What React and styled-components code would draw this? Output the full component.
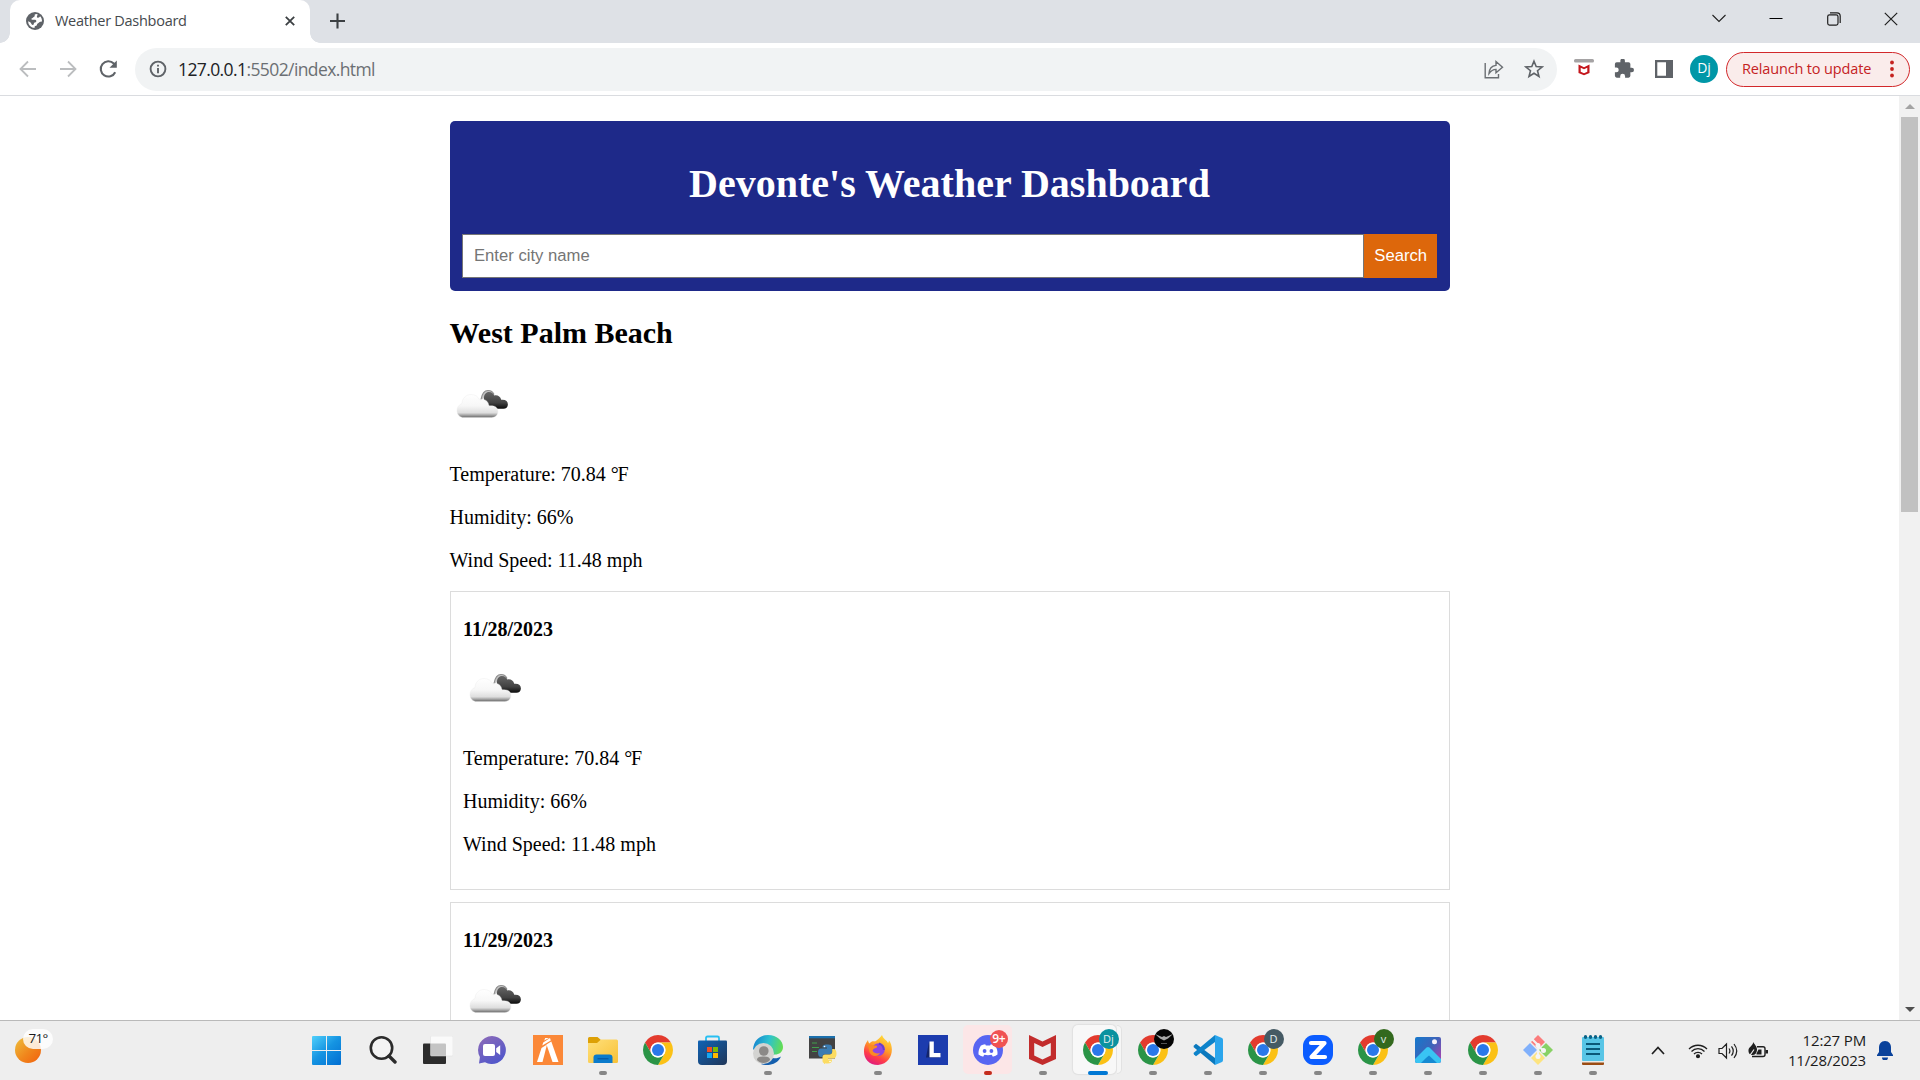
import React from "react";
import styled, { createGlobalStyle } from "styled-components";

const GlobalStyle = createGlobalStyle`
  * { box-sizing: border-box; }
  html, body { margin: 0; padding: 0; height: 100%; overflow: hidden; }
  body { background: #fff; color: #000; }
`;

const ui = `"Open Sans", "Noto Sans", sans-serif`;

const Screen = styled.div`
  width: 1920px;
  height: 1080px;
  display: flex;
  flex-direction: column;
  overflow: hidden;
  font-family: ${ui};
`;

/* ---------- browser chrome ---------- */

const TabStrip = styled.div`
  height: 43px;
  flex: none;
  background: #dee1e6;
  display: flex;
  padding-left: 10px;
`;

const Tab = styled.div`
  position: relative;
  width: 300px;
  height: 43px;
  background: #fff;
  border-radius: 10px 10px 0 0;
  display: flex;
  align-items: center;
  padding: 0 13px 1px 16px;
  &::before, &::after {
    content: "";
    position: absolute;
    bottom: 0;
    width: 10px;
    height: 10px;
  }
  &::before { left: -10px; background: radial-gradient(circle at 0 0, #dee1e6 9.5px, #fff 10px); }
  &::after { right: -10px; background: radial-gradient(circle at 100% 0, #dee1e6 9.5px, #fff 10px); }
`;

const TabTitle = styled.span`
  flex: 1;
  margin-left: 11px;
  padding-bottom: 2px;
  font-size: 14.5px;
  letter-spacing: -0.27px;
  color: #45494d;
  white-space: nowrap;
`;

const NewTab = styled.div`
  width: 55px;
  height: 42px;
  display: flex;
  align-items: center;
  justify-content: center;
`;

const WindowControls = styled.div`
  margin-left: auto;
  display: flex;
  height: 37px;
`;

const WindowButton = styled.div`
  width: 57.5px;
  height: 37px;
  display: flex;
  align-items: center;
  justify-content: center;
`;

const Toolbar = styled.div`
  height: 53px;
  flex: none;
  background: #fff;
  border-bottom: 1px solid #dadce0;
  display: flex;
  align-items: center;
  padding: 0 10px 0 7.5px;
`;

const ToolSlot = styled.div`
  width: ${(p) => p.$w || 40}px;
  height: 40px;
  flex: none;
  display: flex;
  align-items: center;
  justify-content: center;
`;

const Omnibox = styled.div`
  flex: 1;
  height: 43px;
  margin-left: 7.5px;
  background: #f1f3f4;
  border-radius: 22px;
  display: flex;
  align-items: center;
  padding: 0 3px 0 13px;
`;

const Url = styled.span`
  flex: 1;
  margin-left: 11px;
  font-size: 17.5px;
  letter-spacing: -0.6px;
  color: #6b6f73;
  b { font-weight: 400; color: #202124; }
`;

const Avatar = styled.div`
  width: 28px;
  height: 28px;
  border-radius: 50%;
  background: #0097a7;
  color: #fff;
  font-size: 14px;
  line-height: 26px;
  text-align: center;
`;

const Relaunch = styled.div`
  width: 184px;
  height: 35px;
  margin-left: 8px;
  border: 1.5px solid #d2282b;
  border-radius: 18px;
  background: #faeceb;
  color: #c5221f;
  font-size: 14.5px;
  letter-spacing: -0.15px;
  display: flex;
  align-items: center;
  justify-content: space-between;
  padding: 0 15px 0 15px;
  white-space: nowrap;
`;

const RelaunchLabel = styled.span`
  padding-bottom: 2px;
`;

/* ---------- page ---------- */

const Viewport = styled.div`
  flex: 1;
  min-height: 0;
  display: flex;
  background: #fff;
`;

const Page = styled.div`
  flex: 1;
  min-width: 0;
  overflow: hidden;
  padding-top: 25px;
  font-family: "Liberation Serif", "Times New Roman", serif;
  font-size: 20px;
  line-height: 23px;
`;

const Container = styled.main`
  width: 1000px;
  margin: 0 auto;
`;

const Banner = styled.header`
  height: 170px;
  padding: 12.5px;
  background: #1e2989;
  border-radius: 5px;
`;

const Title = styled.h1`
  margin: 27px 0 27px;
  font-size: 40px;
  line-height: 46px;
  text-align: center;
  color: #fff;
`;

const SearchRow = styled.div`
  display: flex;
  height: 44px;
`;

const CityInput = styled.input`
  flex: 1;
  min-width: 0;
  border: 1px solid #767676;
  border-radius: 0;
  padding: 1px 11px 0;
  font: 16.67px "Liberation Sans", Arial, sans-serif;
  outline: none;
  &::placeholder { color: #757575; }
`;

const SearchButton = styled.button`
  width: 73.5px;
  border: 0;
  padding: 1px 0 0 1px;
  background: #dd670b;
  color: #fff;
  font: 16.67px "Liberation Sans", Arial, sans-serif;
`;

const City = styled.h2`
  margin: 25px 0 25.5px;
  font-size: 30px;
  line-height: 34px;
`;

const WeatherIcon = styled.svg`
  display: block;
  width: 62.5px;
  height: 62.5px;
  margin-bottom: 24.5px;
`;

const Reading = styled.p`
  margin: 0 0 20px;
  &:last-of-type { margin-bottom: 19.5px; }
`;

const DegreeSign = styled.span`
  letter-spacing: -1.3px;
`;

const ForecastCard = styled.section`
  height: 299px;
  margin-bottom: 12px;
  border: 1px solid #dcdcdc;
  padding: 25.5px 12.5px 0;
`;

const Day = styled.h4`
  margin: 0 0 19.5px;
  font-size: 20px;
  line-height: 23px;
`;

const Scrollbar = styled.div`
  width: 21px;
  flex: none;
  background: #f1f1f1;
  display: flex;
  flex-direction: column;
  align-items: center;
`;

const ScrollArrow = styled.div`
  height: 21px;
  flex: none;
  display: flex;
  align-items: center;
`;

const ScrollThumb = styled.div`
  width: 17px;
  height: 395px;
  margin-bottom: auto;
  background: #c1c1c1;
`;

/* ---------- taskbar ---------- */

const Taskbar = styled.footer`
  height: 60px;
  flex: none;
  background: #eeeeee;
  border-top: 1px solid #b9b9b9;
  display: flex;
  align-items: stretch;
`;

const WeatherWidget = styled.div`
  position: relative;
  width: 300px;
  flex: none;
  padding: 16px 0 0 15px;
`;

const Sun = styled.div`
  width: 26px;
  height: 26px;
  border-radius: 50%;
  background: linear-gradient(135deg, #eec03c, #f0861c 55%, #f2600d);
`;

const Degrees = styled.div`
  position: absolute;
  left: 23px;
  top: 8px;
  width: 30px;
  height: 20px;
  border-radius: 10px;
  background: rgba(255, 255, 255, 0.82);
  font-size: 13.5px;
  letter-spacing: -0.7px;
  line-height: 19px;
  text-align: center;
  color: #1b1b1b;
`;

const Apps = styled.div`
  display: flex;
`;

const TaskbarApp = styled.div`
  position: relative;
  width: 55px;
  display: flex;
  align-items: center;
  justify-content: center;
  padding-bottom: 1px;
  padding-right: ${(p) => p.$nudge || 0}px;
  isolation: isolate;
  svg { display: block; }
  &::before {
    content: "";
    position: absolute;
    z-index: -1;
    left: 3px;
    top: 4px;
    width: ${(p) => (p.$active ? 43 : 49)}px;
    height: 49px;
    border-radius: 5px;
    background: ${(p) => p.$tint || "transparent"};
    box-shadow: ${(p) => (p.$active ? "0 0 1px 1px #e0e0e0" : "none")};
  }
  &::after {
    content: "";
    position: absolute;
    bottom: 5px;
    left: calc(50% - ${(p) => (p.$active ? 10 : 4)}px);
    width: ${(p) => (p.$active ? 20 : 8)}px;
    height: 4px;
    border-radius: 2px;
    background: ${(p) => p.$dot || "transparent"};
  }
`;

const StackEdge = styled.div`
  position: absolute;
  z-index: -1;
  left: 47px;
  top: 4px;
  width: 5px;
  height: 49px;
  border: 1px solid #e2e2e2;
  border-left: 0;
  border-radius: 0 5px 5px 0;
  background: #f6f6f6;
`;

const ProfileBadge = styled.div`
  position: absolute;
  top: 8px;
  left: 28.5px;
  width: 20px;
  height: 20px;
  border-radius: 50%;
  background: ${(p) => p.$bg};
  color: #e5eef0;
  font-size: 11px;
  line-height: 18px;
  display: flex;
  justify-content: center;
  align-items: center;
`;

const CountBadge = styled.div`
  position: absolute;
  top: 9px;
  left: 29.5px;
  width: 18.5px;
  height: 18px;
  border-radius: 9px;
  background: #f05252;
  color: #fff;
  font-size: 12px;
  font-weight: 600;
  letter-spacing: -0.3px;
  line-height: 17px;
  text-align: center;
`;

const Tray = styled.div`
  margin-left: auto;
  display: flex;
  align-items: center;
  padding-right: 20px;
`;

const TrayIcon = styled.div`
  width: ${(p) => p.$w}px;
  height: 40px;
  display: flex;
  align-items: center;
  justify-content: center;
`;

const Clock = styled.div`
  width: 88px;
  font-size: 15px;
  letter-spacing: -0.15px;
  line-height: 20px;
  text-align: right;
  color: #1b1b1b;
  padding-bottom: 2px;
  margin-right: 4px;
`;

/* ---------- drawings ---------- */

const Globe = () => (
  <svg width="18" height="18" viewBox="0 0 18 18">
    <circle cx="9" cy="9" r="9" fill="#5f6368" />
    <path d="M10.500 2C8.800 2 8.300 3 8.800 3.900 8.500 5 7 4.800 6.600 5.900 5.800 6 5 6.500 5.600 7.400 6.800 8.300 8.500 7 9.800 8.100c1.200 1.200.2 2.300-.9 2.500-1.400.2-.8 1.700-1.700 2.300-.8.500-1.700-.3-2-1.300C4.700 10.300 3.600 9.800 2 9.300a7 7 0 0 0 6.600 6.700c-.2-1.400.1-2 1.500-2.200 1.200-.2.600-1.700 1.600-2.300 1.200-.6 1.500-1.600 2.700-1.800L16 9.500c.1-2.200-.6-4-1.900-5.200-.5 1-1.300 1.700-2.500 1.400-1.300-.4-.6-1.800.2-3.200z" fill="#fff" />
  </svg>
);

const Stroke = ({ w = 20, h = w, box = `0 0 ${w} ${h}`, d, color = "#1f1f1f", sw = 1.3, children }) => (
  <svg width={w} height={h} viewBox={box} fill="none" stroke={color} strokeWidth={sw}>
    <path d={d} />
    {children}
  </svg>
);

const CloudIcon = () => (
  <WeatherIcon viewBox="0 0 62.5 62.5">
    <defs>
      <linearGradient id="cloudLight" gradientUnits="userSpaceOnUse" x1="0" y1="18" x2="0" y2="41.500">
        <stop offset="0" stopColor="#fff" />
        <stop offset=".5" stopColor="#f7f7f7" />
        <stop offset=".8" stopColor="#dedede" />
        <stop offset=".9" stopColor="#a5a5a5" />
        <stop offset="1" stopColor="#686868" />
      </linearGradient>
      <linearGradient id="cloudDark" gradientUnits="userSpaceOnUse" x1="0" y1="15" x2="0" y2="33">
        <stop offset="0" stopColor="#696969" />
        <stop offset=".65" stopColor="#414141" />
        <stop offset="1" stopColor="#080808" />
      </linearGradient>
    </defs>
    <path d="M31 23.500C32 18 34 14.500 38 14.500c3 0 5 1.500 6 4" fill="#c4c4c4" stroke="#8f8f8f" strokeWidth="1.200" />
    <path d="M34 22c0-3.500 2-6 5-6 3 0 4.500 2 5.200 3.500 3-.8 6.300.7 7 4.300 4.300-.6 6.700 1.500 6.700 4.600 0 2.600-2 4.400-4.500 4.400H43L34 26z" fill="url(#cloudDark)" />
    <path d="M14 41.500c-4.200 0-7-3-7-6.800 0-3.400 1.800-6 5-7.200 0-5 3.800-9 9-9 4.300 0 7.500 2.400 8.700 5.600 4.500-2 8.800.7 9.200 5.700 5-.6 9 1 9 5.500 0 3.800-2.700 6.200-6.200 6.200z" fill="url(#cloudLight)" stroke="#e7e7e7" strokeWidth=".5" strokeOpacity=".7" />
  </WeatherIcon>
);

const Chrome = () => (
  <svg width="30" height="30" viewBox="0 0 48 48">
    <path d="M3.220 12A24 24 0 0 1 44.780 12H24A12 12 0 0 0 13.600 30z" fill="#e33b2e" />
    <path d="M44.780 12A24 24 0 0 1 24 48L34.390 30A12 12 0 0 0 24 12z" fill="#fbc116" />
    <path d="M24 48A24 24 0 0 1 3.220 12L13.600 30A12 12 0 0 0 34.390 30z" fill="#2a9446" />
    <circle cx="24" cy="24" r="12" fill="#fff" />
    <circle cx="24" cy="24" r="9.600" fill="#2a78ea" />
  </svg>
);

const Windows = () => (
  <svg width="29" height="29" viewBox="0 0 29 29">
    <defs>
      <linearGradient id="win" gradientUnits="userSpaceOnUse" x1="0" y1="0" x2="26" y2="29">
        <stop offset="0" stopColor="#50d0fb" />
        <stop offset=".5" stopColor="#1594e2" />
        <stop offset="1" stopColor="#0371d3" />
      </linearGradient>
    </defs>
    <path d="M1 0H14V14H0V1Q0 0 1 0zM15 0H28Q29 0 29 1V14H15zM0 15H14V29H1Q0 29 0 28zM15 15H29V28Q29 29 28 29H15z" fill="url(#win)" />
  </svg>
);

const Search = () => (
  <svg width="28" height="28" viewBox="0 0 28 28" fill="none" stroke="#2b2b2b">
    <circle cx="12.500" cy="12" r="10.700" strokeWidth="2.600" fill="#f3f3f3" />
    <path d="M20 20l6 6" strokeWidth="3.400" strokeLinecap="round" />
  </svg>
);

const TaskView = () => (
  <svg width="30" height="28" viewBox="0 0 30 28">
    <rect x="0" y="7.500" width="23" height="20.500" rx="1" fill="#2c2c2c" />
    <rect x="7.500" y="0" width="22.500" height="20" rx="1" fill="#fff" fillOpacity=".72" stroke="#dedede" strokeWidth=".5" />
  </svg>
);

const Chat = () => (
  <svg width="30" height="30" viewBox="0 0 30 30">
    <defs>
      <linearGradient id="chat" x1="0" y1="0" x2=".6" y2="1">
        <stop offset="0" stopColor="#8f6bb7" />
        <stop offset="1" stopColor="#5257ca" />
      </linearGradient>
    </defs>
    <path d="M15 1a14 14 0 1 1-7 26.200L2 28.500 2.900 22A14 14 0 0 1 15 1z" fill="url(#chat)" />
    <rect x="6" y="9" width="12" height="12" rx="2" fill="#fff" />
    <path d="M19.200 13.200l4-3v9.700l-4-3z" fill="#fff" />
  </svg>
);

const FiveM = () => (
  <svg width="30" height="30" viewBox="0 0 30 30">
    <rect width="30" height="30" fill="#fb8838" />
    <path d="M4 27L8.500 13 14 9.500 9.500 27z" fill="#fff" />
    <path d="M9.300 10.500L10.200 7.500 17 3 17.800 5.500zM11.200 5.500L12.200 3H16z" fill="#fff" />
    <path d="M13.500 9.500L18.300 6.500 25.500 27H19.500z" fill="#fff" />
  </svg>
);

const Folder = () => (
  <svg width="30" height="26" viewBox="0 0 30 26">
    <defs>
      <linearGradient id="folder" x1="0" y1="0" x2="1" y2="1">
        <stop offset="0" stopColor="#ffe07b" />
        <stop offset="1" stopColor="#f8c136" />
      </linearGradient>
    </defs>
    <path d="M0 1.500Q0 0 1.500 0H9.500L13 3H28.500V8H0z" fill="#dda006" />
    <path d="M0 6H9L13 2.500H28.500Q30 2.500 30 4V24.500Q30 26 28.500 26H1.500Q0 26 0 24.500z" fill="url(#folder)" />
    <path d="M5.500 26V20.500Q5.500 17.500 8.500 17.500H21.500Q24.500 17.500 24.500 20.500V26z" fill="#0b7bcc" />
    <path d="M9.500 21.800H20.500" stroke="#07519a" strokeWidth="1" />
  </svg>
);

const Store = () => (
  <svg width="29" height="30" viewBox="0 0 29 30">
    <defs>
      <linearGradient id="store" x1="0" y1="0" x2="1" y2="1">
        <stop offset="0" stopColor="#0f63b5" />
        <stop offset="1" stopColor="#203658" />
      </linearGradient>
    </defs>
    <path d="M8 8V3Q8 1.500 9.500 1.500H19.500Q21 1.500 21 3V8" fill="none" stroke="#28bff2" strokeWidth="1.800" />
    <path d="M0 6.500Q0 5.500 1 5.500H28Q29 5.500 29 6.500V26Q29 30 25 30H4Q0 30 0 26z" fill="url(#store)" />
    <path d="M9 12h5v5H9z" fill="#f25022" /><path d="M15 12h5v5h-5z" fill="#7fba00" />
    <path d="M9 18h5v5H9z" fill="#16a6f0" /><path d="M15 18h5v5h-5z" fill="#ffb900" />
  </svg>
);

const Edge = () => (
  <svg width="30" height="30" viewBox="0 0 30 30">
    <defs>
      <linearGradient id="edge" x1="0" y1=".3" x2="1" y2=".5">
        <stop offset="0" stopColor="#1684cf" />
        <stop offset=".5" stopColor="#2cc2cf" />
        <stop offset="1" stopColor="#66de4f" />
      </linearGradient>
    </defs>
    <path d="M0 14C1 5 7 0 15 0c9 0 15 6 15 12 0 5-4 7.500-8 7.500L8 22z" fill="url(#edge)" />
    <path d="M8 29C12 31 24 31 28 21.500 24 24 20 23.500 18 22z" fill="#145fae" />
    <circle cx="10.500" cy="18.500" r="10.500" fill="#d3d3d1" />
    <circle cx="10.800" cy="16" r="4.800" fill="#8b8987" />
    <path d="M4 25c0-3 3-3.500 6.500-3.500S17 22 17 25c-1.500 2-4 3-6.500 3S5.500 27 4 25z" fill="#8b8987" />
  </svg>
);

const PythonIde = () => (
  <svg width="28" height="28" viewBox="0 0 28 28">
    <rect width="26" height="22.500" fill="#424242" />
    <rect width="26" height="2.300" fill="#1c70ad" />
    <path d="M3 7H8M3 11.500H10M3 15.500H8" stroke="#409f4c" strokeWidth="1" />
    <path d="M18 8.500c4 0 5 .8 5 3V16c0 1.500-1 2.300-2.500 2.300H16c-1.600 0-2.500 1-2.500 2.700H12c-2.200 0-3-2-3-4.500s1-4 3-4h6v-1h-4.500c0-2 1-3 4.500-3z" fill="#3b7cb2" />
    <path d="M18.500 27.500c-4 0-5-.8-5-3V21c0-1.500 1-2.500 2.500-2.500h4.500c1.700 0 2.700-1.200 2.700-2.700V13h1.300c2.500 0 3 2.500 3 4.700 0 2.500-1 4.800-3 4.800h-5.500v1H23c0 3-1.500 4-4.500 4z" fill="#fcdc62" />
    <circle cx="15.500" cy="10.500" r=".8" fill="#fff" /><circle cx="21" cy="25.500" r=".8" fill="#fff" />
  </svg>
);

const Firefox = () => (
  <svg width="30" height="30" viewBox="0 0 30 30">
    <defs>
      <linearGradient id="fox" x1=".8" y1="0" x2=".35" y2="1">
        <stop offset="0" stopColor="#ffe43c" />
        <stop offset=".45" stopColor="#ff9a28" />
        <stop offset=".75" stopColor="#ff3d48" />
        <stop offset="1" stopColor="#e01d7d" />
      </linearGradient>
    </defs>
    <path d="M19 0c1 4 5 5 6 8 1-1 1-2 .7-3 6 7 4 24-10.700 25C6 30 1 24 1 16.500 1 11 3 8 5 5c0 2 1 3 1.500 3.500C8 6 11 6 12 6.500 14.500 5 17 3 19 0z" fill="url(#fox)" />
    <circle cx="15.500" cy="14.500" r="6.300" fill="#9045e2" />
    <path d="M5 10c3-1.500 5 .5 8 .5 1 0 2 1 .5 2.200-2 1-3.500.8-4 3C11 18 14 19 17 18c-2 4-9 4-10.500-1z" fill="#fa8a24" />
    <path d="M16 8.500c3 1 4.800 4 4.800 6.500" stroke="#6741c9" strokeWidth="2" fill="none" />
  </svg>
);

const LApp = () => (
  <svg width="30" height="30" viewBox="0 0 30 30">
    <rect width="30" height="30" fill="#1c3cae" />
    <path d="M11 7L8 22.500h13l2-4-9 0z" fill="#13246b" />
    <path d="M11.500 6.500h4.300V18H22.500v4.200h-11z" fill="#fff" />
  </svg>
);

const Discord = () => (
  <svg width="30" height="30" viewBox="0 0 30 30">
    <circle cx="15" cy="15" r="15" fill="#5865f2" />
    <path d="M12.200 9.200c-1.800.2-3 .7-4.300 1.400C6 13.500 5.300 16.700 5.500 19.600c1.700 1.300 3.200 1.800 4.600 2.100l1.200-1.900c2.500.6 4.900.6 7.400 0l1.200 1.900c1.400-.3 3-.8 4.600-2.100.3-3.500-.6-6.300-2.400-9-1.300-.7-2.700-1.200-4.300-1.400l-.7 1.400c-1.400-.2-2.800-.2-4.200 0z" fill="#fff" />
    <ellipse cx="11.600" cy="16" rx="1.900" ry="2" fill="#5865f2" /><ellipse cx="18.400" cy="16" rx="1.900" ry="2" fill="#5865f2" />
  </svg>
);

const McAfee = () => (
  <svg width="27" height="30" viewBox="0 0 27 30">
    <path d="M0 0L13.500 6.500 27 0V24L13.500 30 0 24zM5.200 8V20.500L13.500 24.500 21.800 20.500V8L13.500 12z" fill="#c22c2c" fillRule="evenodd" />
  </svg>
);

const VsCode = () => (
  <svg width="30" height="30" viewBox="0 0 30 30">
    <path d="M1 10.500L3 8.800 22 23V30L0.500 12z" fill="#0a78bd" />
    <path d="M1 19.500L3 21.200 22 7V0L.5 18z" fill="#0d83ca" />
    <path d="M22 0l7 3Q30 3.500 30 5V25Q30 26.500 29 27L22 30z" fill="#2aa5ec" />
  </svg>
);

const Zoom = () => (
  <svg width="30" height="30" viewBox="0 0 30 30">
    <rect width="30" height="30" rx="11" fill="#0b5cff" />
    <path d="M8 8H21.500L8.500 22H22" fill="none" stroke="#fff" strokeWidth="4.200" strokeLinejoin="round" strokeLinecap="round" />
  </svg>
);

const Photos = () => (
  <svg width="26" height="26" viewBox="0 0 26 26">
    <defs>
      <linearGradient id="photo" x1="0" y1="0" x2="1" y2=".7">
        <stop offset="0" stopColor="#1579cc" />
        <stop offset=".6" stopColor="#3d63b9" />
        <stop offset="1" stopColor="#9848b2" />
      </linearGradient>
    </defs>
    <rect width="26" height="26" rx="2" fill="url(#photo)" />
    <path d="M0 22L11.500 10.500Q13 9.500 14.500 10.500L26 22V24Q26 26 24 26H2Q0 26 0 24z" fill="#39c4f3" />
    <path d="M11 21L14 18.500 22 26H6z" fill="#168ad2" />
    <circle cx="19.500" cy="4.800" r="2.500" fill="#f5f2fb" />
  </svg>
);

const Git = () => (
  <svg width="30" height="30" viewBox="0 0 30 30">
    <path d="M15 0L22 7 15 14 8 7z" fill="#fb7c7c" />
    <path d="M7 8L14 15 7 22 0 15z" fill="#80b0fb" />
    <path d="M23 8L30 15 23 22 16 15z" fill="#87d165" />
    <path d="M15 16L22 23 15 30 8 23z" fill="#fde480" />
    <path d="M9 4L15 10V22M15 11L21 16" stroke="#f2f2f2" strokeWidth="2.200" fill="none" />
    <circle cx="15" cy="10.500" r="2.500" fill="#f5f5f5" /><circle cx="15" cy="21.500" r="2.500" fill="#f5f5f5" /><circle cx="20.500" cy="15.500" r="2.500" fill="#f5f5f5" />
  </svg>
);

const Notepad = () => (
  <svg width="22" height="30" viewBox="0 0 22 30">
    <rect y="25" width="22" height="5" rx="1" fill="#9b4c13" />
    <rect y="24.500" width="22" height="3" fill="#eceae6" />
    <rect y="2" width="22" height="24" rx="1" fill="#58c5e6" />
    <path d="M4 9H18M4 14H18M4 19H18" stroke="#0b5878" strokeWidth="1.800" />
    <g fill="#0c6286">
      {[3.5, 8.5, 13.5, 18.5].map((x) => <ellipse key={x} cx={x} cy="2" rx="1.700" ry="2" />)}
    </g>
  </svg>
);

const Eagle = () => (
  <svg width="20" height="20" viewBox="0 0 20 20">
    <path d="M1 5L8 8 10 7 12 8 19 5 14 9.500 10 11.500 6 9.500z" fill="#a8a8a8" />
    <path d="M7 14.500H13" stroke="#555" />
  </svg>
);

const apps = [
  { icon: <Windows />, nudge: 2 },
  { icon: <Search /> },
  { icon: <TaskView /> },
  { icon: <Chat />, nudge: 2 },
  { icon: <FiveM /> },
  { icon: <Folder />, open: true },
  { icon: <Chrome /> },
  { icon: <Store />, nudge: 1 },
  { icon: <Edge />, open: true },
  { icon: <PythonIde /> },
  { icon: <Firefox />, open: true },
  { icon: <LApp /> },
  { icon: <Discord />, open: true, count: "9+" },
  { icon: <McAfee />, open: true },
  { icon: <Chrome />, open: true, active: true, badge: "Dj", badgeBg: "#0a929f" },
  { icon: <Chrome />, open: true, badge: <Eagle />, badgeBg: "#050505" },
  { icon: <VsCode />, open: true },
  { icon: <Chrome />, open: true, badge: "D", badgeBg: "#455a64" },
  { icon: <Zoom />, open: true },
  { icon: <Chrome />, open: true, badge: "v", badgeBg: "#33691e" },
  { icon: <Photos />, open: true },
  { icon: <Chrome />, open: true },
  { icon: <Git />, open: true },
  { icon: <Notepad />, open: true },
];

const forecast = [
  { day: "11/28/2023", temperature: "70.84", humidity: 66, wind: "11.48" },
  { day: "11/29/2023" },
];

const Conditions = ({ temperature, humidity, wind }) => (
  <>
    <CloudIcon />
    {temperature && (
      <>
        <Reading>Temperature: {temperature} <DegreeSign>°</DegreeSign>F</Reading>
        <Reading>Humidity: {humidity}%</Reading>
        <Reading>Wind Speed: {wind} mph</Reading>
      </>
    )}
  </>
);

export default function App() {
  return (
    <Screen>
      <GlobalStyle />
      <TabStrip>
        <Tab>
          <Globe />
          <TabTitle>Weather Dashboard</TabTitle>
          <Stroke w={14} d="M2.800 2.800L11.200 11.200M11.200 2.800L2.800 11.200" color="#3c4043" sw={1.8} />
        </Tab>
        <NewTab>
          <Stroke w={16} d="M7.500 .5V15.500M0 8H15" color="#3c4043" sw={2.1} />
        </NewTab>
        <WindowControls>
          <WindowButton><Stroke w={14} h={9} d="M.5 1L7 7.500 13.500 1" sw={1.1} /></WindowButton>
          <WindowButton><Stroke w={14} h={2} d="M.5 .5H13.500" sw={1} color="#000" /></WindowButton>
          <WindowButton>
            <Stroke w={14} d="M3 .8H10Q13.200.8 13.200 4V11" sw={1.2}>
              <rect x=".7" y="2.800" width="10.300" height="10.300" rx="1.800" />
            </Stroke>
          </WindowButton>
          <WindowButton><Stroke w={14} d="M.8.8L13.200 13.200M13.200.8L.8 13.200" sw={1.2} /></WindowButton>
        </WindowControls>
      </TabStrip>

      <Toolbar>
        <ToolSlot><Stroke w={18} d="M17 9H2M9 1.500L1.500 9 9 16.500" color="#bbbdbf" sw={1.8} /></ToolSlot>
        <ToolSlot><Stroke w={18} d="M1 9H16M9 1.500L16.500 9 9 16.500" color="#bbbdbf" sw={1.8} /></ToolSlot>
        <ToolSlot>
          <Stroke w={20} d="M17.200 13.200A7.600 7.600 0 1 1 15.800 4.600L17.500 6.500" color="#5f6368" sw={2.1}>
            <path d="M18.800 1.500V8.700H11.500z" fill="#5f6368" stroke="none" />
          </Stroke>
        </ToolSlot>
        <Omnibox>
          <ToolSlot $w={19}>
            <Stroke w={18} d="M9 8V13.200M9 4.700V6.600" color="#5f6368" sw={1.9}><circle cx="9" cy="9" r="7.400" /></Stroke>
          </ToolSlot>
          <Url><b>127.0.0.1</b>:5502/index.html</Url>
          <ToolSlot>
            <Stroke w={20} d="M1.200 4V18.700H14.500V15M5 14.500C5.300 9.500 8 6.800 12 6.400V2.500L18.500 8.200 12 13.800V10.400C9 10.500 7 11.700 5 14.500z" color="#6b6f73" sw={1.4} />
          </ToolSlot>
          <ToolSlot>
            <Stroke w={20} d="M10 2.200L12.200 7.600 18 8 13.500 11.700 15 17.400 10 14.300 5 17.400 6.500 11.700 2 8 7.800 7.600z" color="#5f6368" sw={1.6} />
          </ToolSlot>
        </Omnibox>
        <ToolSlot $w={53}>
          <svg width="22" height="20" viewBox="0 0 22 20">
            <rect x="1" y="0" width="20" height="3.600" rx="1.500" fill="#a5a3a4" />
            <path d="M5.500 5.500L11 8.200 16.500 5.500V14L11 16.300 5.500 14zM7.700 8.700V12.800L11 14.200 14.300 12.800V8.700L11 10.300z" fill="#c4161c" fillRule="evenodd" />
          </svg>
        </ToolSlot>
        <ToolSlot $w={27}>
          <svg width="20" height="20" viewBox="1 1.500 22 22">
            <path d="M20.500 11H19V7a2 2 0 0 0-2-2h-4V3.500a2.500 2.500 0 0 0-5 0V5H4a2 2 0 0 0-2 2v3.800h1.500a2.700 2.700 0 0 1 0 5.400H2V20a2 2 0 0 0 2 2h3.800v-1.500a2.700 2.700 0 0 1 5.400 0V22H17a2 2 0 0 0 2-2v-4h1.500a2.500 2.500 0 0 0 0-5z" fill="#5f6368" />
          </svg>
        </ToolSlot>
        <ToolSlot $w={53}>
          <svg width="18" height="18" viewBox="0 0 18 18">
            <path d="M0 0H18V18H0zM2.300 2.300V15.700H11V2.300z" fill="#5f6368" fillRule="evenodd" />
          </svg>
        </ToolSlot>
        <Avatar>Dj</Avatar>
        <Relaunch>
          <RelaunchLabel>Relaunch to update</RelaunchLabel>
          <svg width="4" height="18" viewBox="0 0 4 18" fill="#c5221f">
            <circle cx="2" cy="2.500" r="1.900" /><circle cx="2" cy="9" r="1.900" /><circle cx="2" cy="15.500" r="1.900" />
          </svg>
        </Relaunch>
      </Toolbar>

      <Viewport>
        <Page>
          <Container>
            <Banner>
              <Title>Devonte's Weather Dashboard</Title>
              <SearchRow>
                <CityInput placeholder="Enter city name" />
                <SearchButton>Search</SearchButton>
              </SearchRow>
            </Banner>
            <City>West Palm Beach</City>
            <Conditions temperature="70.84" humidity={66} wind="11.48" />
            {forecast.map(({ day, ...conditions }) => (
              <ForecastCard key={day}>
                <Day>{day}</Day>
                <Conditions {...conditions} />
              </ForecastCard>
            ))}
          </Container>
        </Page>
        <Scrollbar>
          <ScrollArrow><svg width="10" height="5"><path d="M0 5L5 0 10 5z" fill="#a3a3a3" /></svg></ScrollArrow>
          <ScrollThumb />
          <ScrollArrow><svg width="10" height="5"><path d="M0 0H10L5 5z" fill="#505050" /></svg></ScrollArrow>
        </Scrollbar>
      </Viewport>

      <Taskbar>
        <WeatherWidget>
          <Sun />
          <Degrees>71°</Degrees>
        </WeatherWidget>
        <Apps>
          {apps.map((a, i) => (
            <TaskbarApp
              key={i}
              $active={a.active}
              $nudge={a.nudge}
              $tint={a.active ? "#f8f8f8" : a.count ? "#fce6e7" : undefined}
              $dot={a.active ? "#0078d4" : a.count ? "#c42b1c" : a.open ? "#868686" : undefined}
            >
              {a.active && <StackEdge />}
              {a.icon}
              {a.badge && <ProfileBadge $bg={a.badgeBg}>{a.badge}</ProfileBadge>}
              {a.count && <CountBadge>{a.count}</CountBadge>}
            </TaskbarApp>
          ))}
        </Apps>
        <Tray>
          <TrayIcon $w={40}><Stroke w={14} h={9} d="M1 8L7 1.500 13 8" sw={1.7} /></TrayIcon>
          <TrayIcon $w={40}>
            <Stroke w={20} h={16} d="M1 6A12.700 12.700 0 0 1 19 6M3.500 8.500A9 9 0 0 1 16.500 8.500M6 11A5.600 5.600 0 0 1 14 11" sw={1.3}>
              <circle cx="10" cy="13.200" r="1.400" fill="#1f1f1f" />
            </Stroke>
          </TrayIcon>
          <TrayIcon $w={20}>
            <Stroke w={20} h={18} d="M1 6.500H4L8.500 2V16L4 11.500H1zM11 6.500Q12.800 9 11 11.500M13.500 4.300Q17 9 13.500 13.700M16 2Q21.500 9 16 16" sw={1.2} />
          </TrayIcon>
          <TrayIcon $w={40}>
            <svg width="20" height="17" viewBox="0 0 20 17" fill="none" stroke="#1f1f1f">
              <path d="M9 4.700H15Q17 4.700 17 6.700V12.500Q17 14.500 15 14.500H4" strokeWidth="1.400" />
              <path d="M17.500 8H20V11.500H17.500z" fill="#1f1f1f" stroke="none" />
              <path d="M8.500 12.500V11.500L10.500 7.500H13.500V12.500z" fill="#1f1f1f" stroke="none" />
              <path d="M5.500 0C6 2.500 9.200 4 9 8c-.2 3-2 5-4.500 5C2 13 .2 11 .5 8 .7 5 4.500 4 5.500 0z" fill="#1f1f1f" stroke="none" />
              <path d="M.8 15L6 7.500" stroke="#eee" strokeWidth="1.200" />
            </svg>
          </TrayIcon>
          <Clock>12:27 PM<br />11/28/2023</Clock>
          <TrayIcon $w={30}>
            <svg width="16" height="19" viewBox="0 0 16 19">
              <path d="M8 0C4 0 2 3 2 6.500V11L0 14V15H16V14L14 11V6.500C14 3 12 0 8 0zM5 16.500a3 3 0 0 0 6 0z" fill="#0a429b" />
            </svg>
          </TrayIcon>
        </Tray>
      </Taskbar>
    </Screen>
  );
}
